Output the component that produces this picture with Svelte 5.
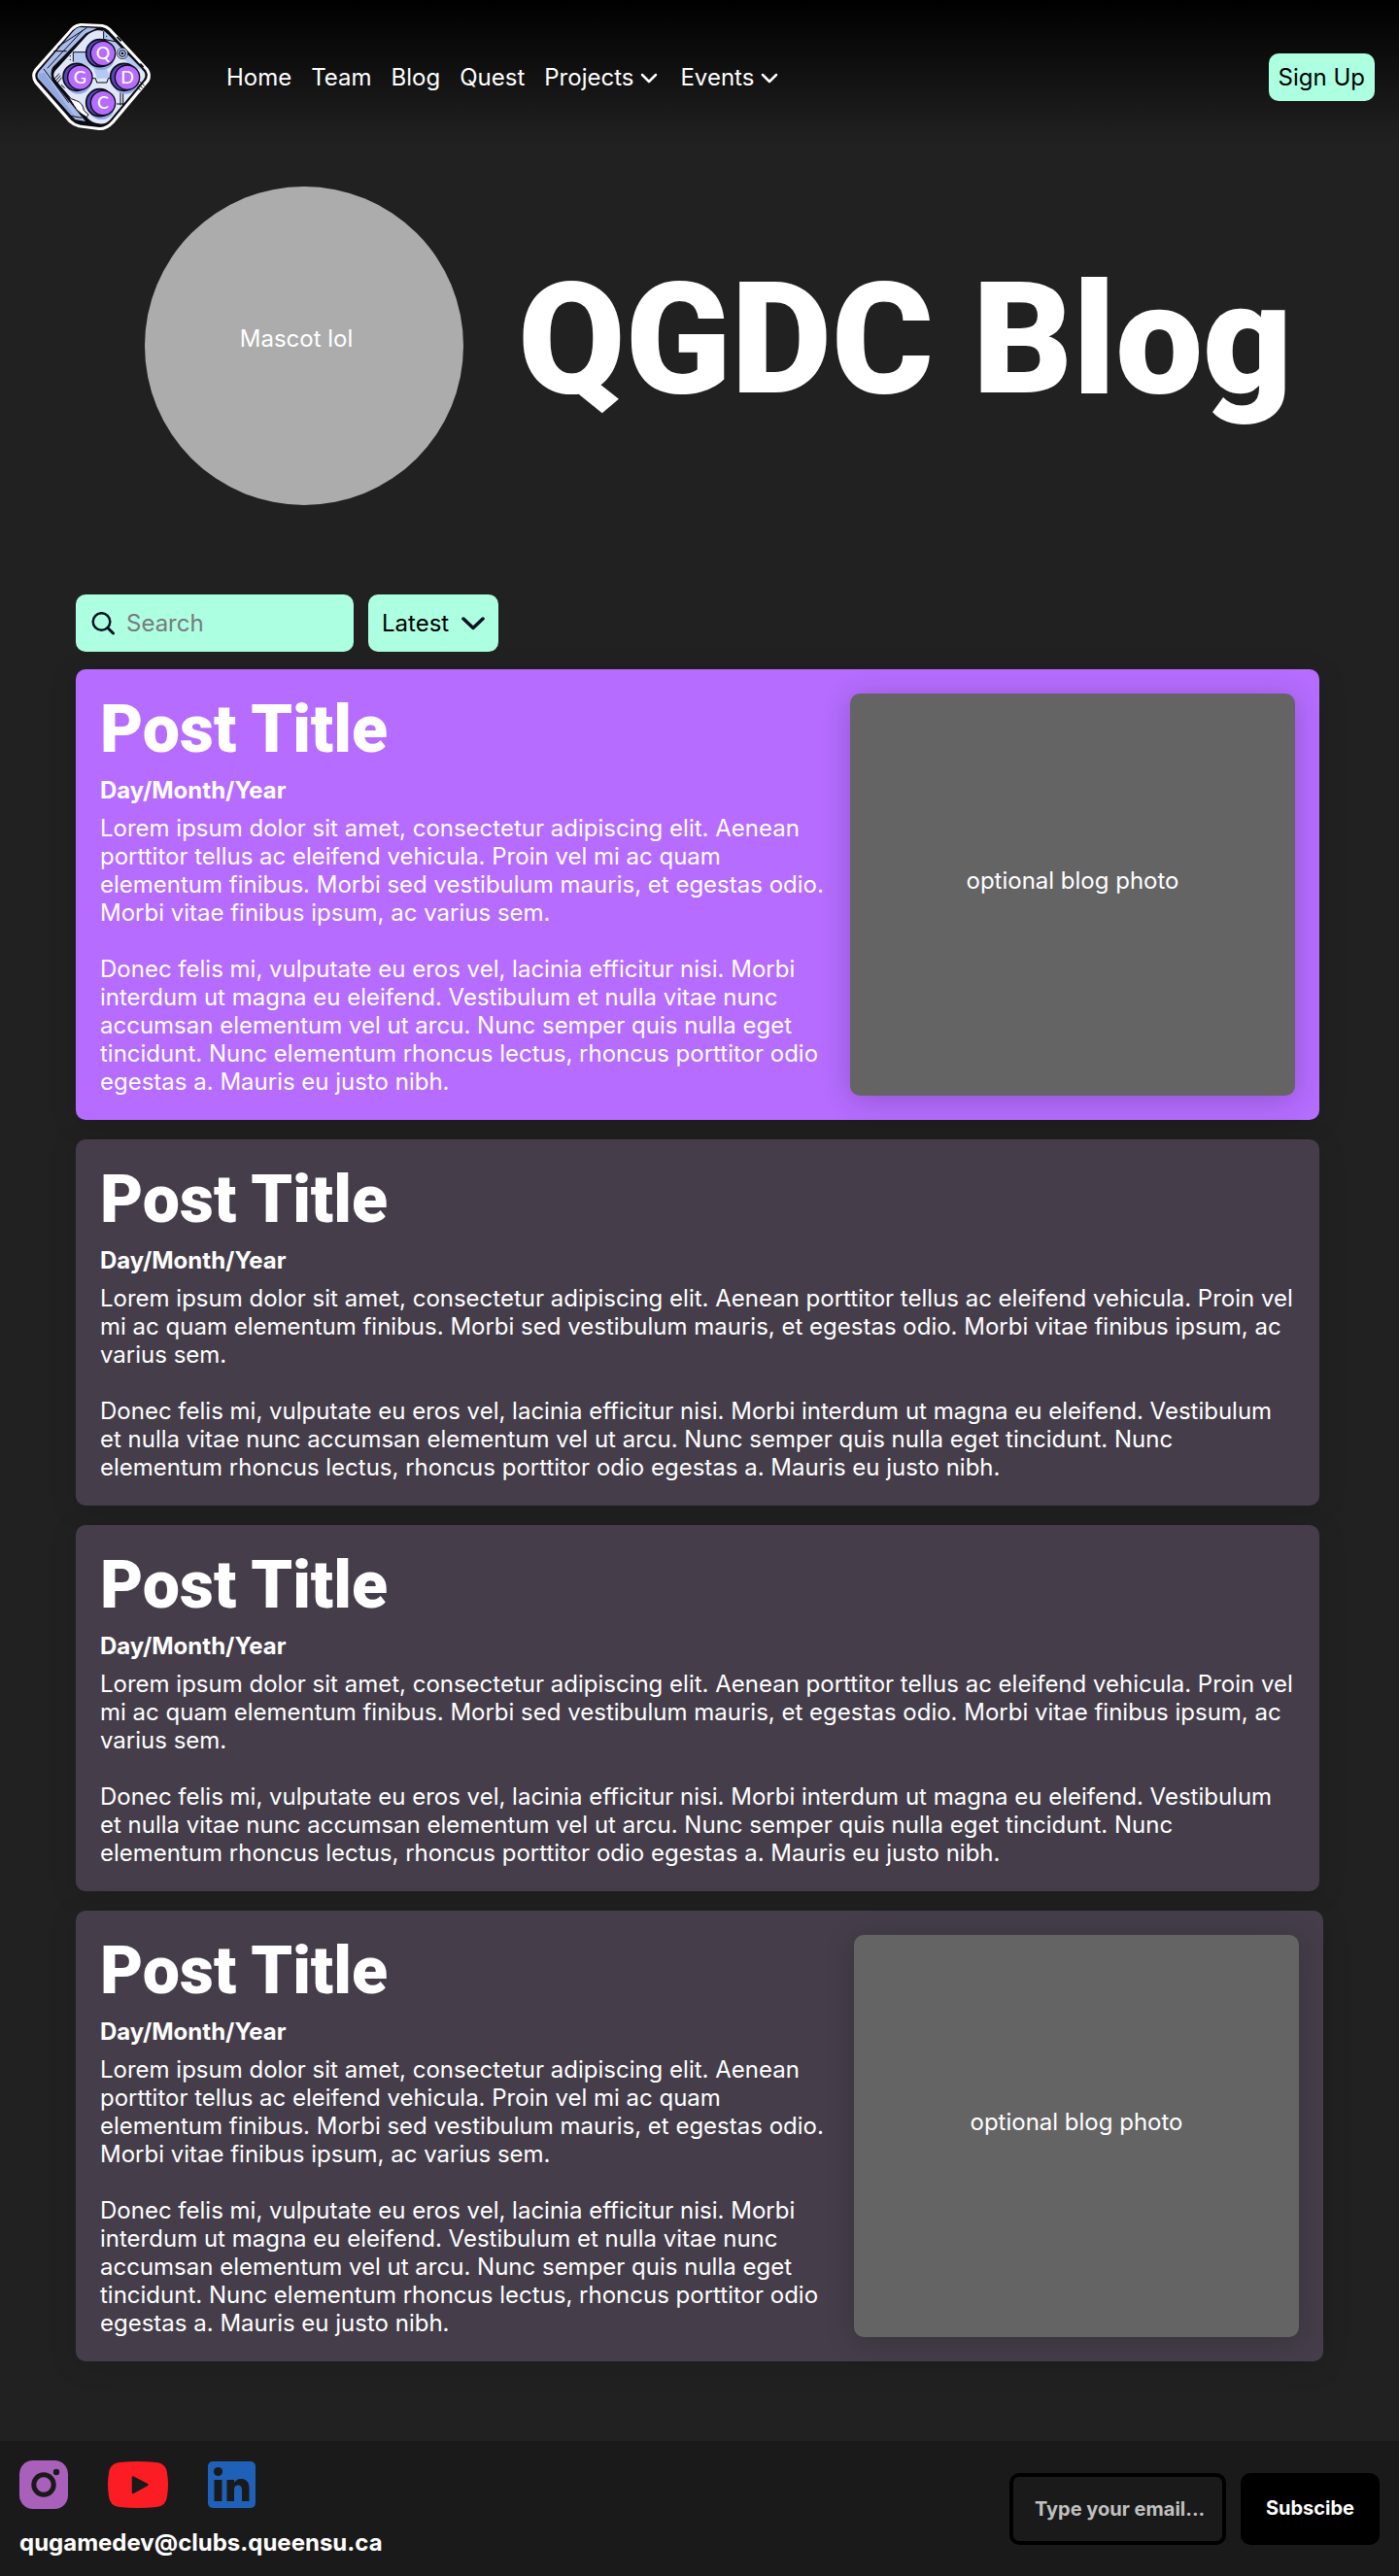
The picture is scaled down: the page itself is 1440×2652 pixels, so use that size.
<script>
  const links = ['Home', 'Team', 'Blog', 'Quest'];
  const menus = ['Projects', 'Events'];
  const intro =
    'Lorem ipsum dolor sit amet, consectetur adipiscing elit. Aenean porttitor tellus ac eleifend vehicula. Proin vel mi ac quam elementum finibus. Morbi sed vestibulum mauris, et egestas odio. Morbi vitae finibus ipsum, ac varius sem.';
  const rest =
    'Donec felis mi, vulputate eu eros vel, lacinia efficitur nisi. Morbi interdum ut magna eu eleifend. Vestibulum et nulla vitae nunc accumsan elementum vel ut arcu. Nunc semper quis nulla eget tincidunt. Nunc elementum rhoncus lectus, rhoncus porttitor odio egestas a. Mauris eu justo nibh.';
  const posts = [
    { featured: true, photo: true },
    { featured: false, photo: false },
    { featured: false, photo: false },
    { featured: false, photo: true }
  ];
  const keys = [
    { letter: 'Q', x: 258, y: 134 },
    { letter: 'G', x: 187, y: 208 },
    { letter: 'D', x: 333, y: 208 },
    { letter: 'C', x: 258, y: 287 }
  ];
</script>

<div class="page">
  <header>
    <a class="logo" href="#home" aria-label="QGDC home">
      <svg viewBox="30 35 384 345" width="128" height="115" aria-hidden="true">
        <path d="M190 41 L257 44 Q272 47 282 57 L398 181 Q411 201 400 221 L292 349 Q270 373 245 371 L183 363 Q165 358 152 346 L47 226 Q32 204 46 183 L158 57 Q171 42 190 41Z" fill="#fff" />
        <path d="M192 49 L254 52 Q266 54 275 63 L390 186 Q400 201 391 216 L286 342 Q267 364 246 362 L188 355 Q171 351 160 340 L55 220 Q43 204 54 188 L164 63 Q175 51 192 49Z" fill="#0b0b10" />
        <path d="M185 53 L239 56 L205 72 L103 176 Q91 196 104 222 L204 344 L172 338 L60 214 Q51 204 60 190 L165 67Q175 55 185 53Z" fill="#a9bce9" />
        <path d="M60 196 L78 194 L140 286 L170 326 L166 333 L60 212Z" fill="#93a8df" />
        <path d="M240 63 Q254 61 266 70 L385 190 Q392 202 384 214 L281 338 Q265 355 246 351 Q226 350 212 335 L110 214 Q101 201 110 188 L207 80 Q222 66 240 63Z" fill="#e0e7fb" />
        <path d="M258 62 L275 76 L380 184 L348 178 L312 140 L260 90Z M166 130 L212 130 L222 180 L268 178 L282 210 L240 212 L228 178 L166 160Z" fill="#b5c8f2" />
        <path d="M106 127 L146 127 M118 114 L208 55 M86 180 L196 62 M75 182 L152 286 M158 327 L193 333 M166 130 H212 M166 130 V160 M224 211 H235 L239 224 H270 L274 211 H290 M260 66 V90 L300 98 M312 251 V294 M320 251 V294 M300 290 H327 M384 186 L395 202" fill="none" stroke="#0b0b10" stroke-width="3" />
        <path d="M106 215 L123 196 M110 221 L127 202 M117 225 L131 208 M122 234 L131 243 M129 231 L140 241 M362 236 L374 248 M367 229 L380 241 M372 221 L386 234" stroke="#0b0b10" stroke-width="3" />
        <circle cx="157" cy="142" r="2" /><circle cx="157" cy="153" r="2" /><circle cx="269" cy="81" r="2" />
        <circle cx="318" cy="134" r="17" fill="#b5c8f2" stroke="#0b0b10" stroke-width="2" />
        <circle cx="318" cy="134" r="10" fill="none" stroke="#0b0b10" stroke-width="3" />
        <circle cx="318" cy="134" r="4" />
        <path d="M148 264 Q158 276 176 280 Q196 287 199 310 L213 323 L208 331 L192 321 Q174 309 163 286Z" fill="#fff" stroke="#0b0b10" stroke-width="3" />
        <path d="M301 83 L314 96 M373 166 L383 176" stroke="#0b0b10" stroke-width="5" />
        {#each keys as key}
          <ellipse cx={key.x - 5} cy={key.y + 14} rx="40" ry="37" fill="#8fa8e5" />
          <circle cx={key.x - 10} cy={key.y - 1} r="42" fill="#5546b8" stroke="#0b0b10" stroke-width="5" />
          <circle cx={key.x} cy={key.y} r="38" fill="#b56cff" stroke="#0b0b10" stroke-width="4" />
          <text x={key.x} y={key.y + 19} text-anchor="middle">{key.letter}</text>
        {/each}
      </svg>
    </a>
    <nav aria-label="Main">
      {#each links as link}
        <a href="#{link.toLowerCase()}">{link}</a>
      {/each}
      {#each menus as menu}
        <button type="button" class="menu">
          {menu}
          <svg viewBox="0 0 24 24" width="24" height="24" aria-hidden="true">
            <path d="M5 9 L12 16 L19 9" fill="none" stroke="#fff" stroke-width="2.5" stroke-linecap="round" stroke-linejoin="round" />
          </svg>
        </button>
      {/each}
    </nav>
    <button type="button" class="signup">Sign Up</button>
  </header>

  <section class="hero">
    <div class="mascot">Mascot lol</div>
    <h1>QGDC Blog</h1>
  </section>

  <main>
    <div class="tools">
      <label class="search">
        <svg viewBox="0 0 24 24" width="24" height="24" aria-hidden="true">
          <circle cx="10.500" cy="10" r="8.800" fill="none" stroke="#04121f" stroke-width="2.500" />
          <path d="M17 16.500 L22.500 22" stroke="#04121f" stroke-width="3" stroke-linecap="round" />
        </svg>
        <input type="search" placeholder="Search" aria-label="Search posts" />
      </label>
      <div class="sort">
        <select aria-label="Sort posts">
          <option>Latest</option>
          <option>Oldest</option>
        </select>
        <svg viewBox="0 0 24 14" width="24" height="14" aria-hidden="true">
          <path d="M2 2 L12 11.5 L22 2" fill="none" stroke="#04121f" stroke-width="3.5" stroke-linecap="round" stroke-linejoin="round" />
        </svg>
      </div>
    </div>

    {#each posts as post}
      <article class:featured={post.featured}>
        <div class="copy">
          <h2>Post Title</h2>
          <p class="date">Day/Month/Year</p>
          <div class="body">
            <p>{intro}</p>
            <p>{rest}</p>
          </div>
        </div>
        {#if post.photo}
          <div class="photo">optional blog photo</div>
        {/if}
      </article>
    {/each}
  </main>

  <footer>
    <div class="contact">
      <div class="social">
        <a href="#instagram" aria-label="Instagram">
          <svg viewBox="0 0 50 50" width="50" height="50" aria-hidden="true">
            <rect width="50" height="50" rx="14" fill="#a860bb" />
            <circle cx="25" cy="25" r="10.2" fill="none" stroke="#1a1a1a" stroke-width="5" />
            <circle cx="38" cy="12" r="3.2" fill="#1a1a1a" />
          </svg>
        </a>
        <a href="#youtube" aria-label="YouTube">
          <svg viewBox="0 0 62 48" width="62" height="48" aria-hidden="true">
            <path d="M12 1 Q31 -1 50 1 Q60 2 61 12 Q63 24 61 36 Q60 46 50 47 Q31 49 12 47 Q2 46 1 36 Q-1 24 1 12 Q2 2 12 1Z" fill="#fc1c23" />
            <path d="M26 16.500 L40.500 24 L26 32Z" fill="#1a1a1a" stroke="#1a1a1a" stroke-width="2.500" stroke-linejoin="round" />
          </svg>
        </a>
        <a href="#linkedin" aria-label="LinkedIn">
          <svg viewBox="0 0 49 48" width="49" height="48" aria-hidden="true">
            <rect width="49" height="48" rx="5" fill="#1f61b8" />
            <circle cx="10.500" cy="10.500" r="4.600" fill="#1a1a1a" />
            <path d="M6.500 19 H14.500 V41 H6.500Z M19.500 19 H27 V22 Q29.500 18 34 18 Q42.500 18 42.500 28 V41 H35 V29.500 Q35 24.500 31 24.500 Q27 24.500 27 29.500 V41 H19.500Z" fill="#1a1a1a" />
          </svg>
        </a>
      </div>
      <a class="mail" href="mailto:qugamedev@clubs.queensu.ca">qugamedev@clubs.queensu.ca</a>
    </div>
    <form>
      <input type="email" placeholder="Type your email..." aria-label="Email address" />
      <button type="button">Subscibe</button>
    </form>
  </footer>
</div>

<style>
  :global(body) {
    margin: 0;
    background: #212121;
  }
  .page,
  .page button,
  .page input,
  .page select {
    font-family: Inter, 'Liberation Sans', sans-serif;
    font-size: 24px;
    line-height: 29px;
  }
  .page {
    color: #fff;
    background: #212121;
  }
  .page * {
    box-sizing: border-box;
  }
  a {
    color: inherit;
    text-decoration: none;
  }
  button {
    border: 0;
    cursor: pointer;
  }
  svg {
    display: block;
    flex: none;
  }
  h1,
  h2,
  p {
    margin: 0;
  }
  header {
    display: flex;
    align-items: center;
    padding: 22px 25px 10px 30px;
    background: linear-gradient(#000, #212121);
  }
  .logo text {
    font: 500 54px Lato, sans-serif;
    fill: #fff;
  }
  nav {
    display: flex;
    align-items: center;
    gap: 20px;
    margin: 0 auto 0 75px;
  }
  .menu {
    display: flex;
    align-items: center;
    gap: 4px;
    padding: 0;
    color: #fff;
    background: none;
  }
  .signup {
    padding: 10px;
    border-radius: 10px;
    color: #000;
    background: #adffe2;
  }
  .hero {
    display: flex;
    align-items: center;
    gap: 56px;
    padding: 45px 80px 92px 149px;
  }
  .mascot {
    display: grid;
    flex: none;
    place-items: center;
    width: 328px;
    aspect-ratio: 1;
    padding: 0 16px 16px 0;
    border-radius: 50%;
    background: #acacac;
  }
  h1,
  h2 {
    font-family: Roboto, 'Liberation Sans', sans-serif;
    font-weight: 900;
  }
  h1 {
    padding-bottom: 12px;
    font-size: 160px;
    line-height: 188px;
    white-space: nowrap;
  }
  main {
    display: flex;
    flex-direction: column;
    gap: 20px;
    padding: 0 78px 82px;
  }
  .tools {
    display: flex;
    gap: 15px;
    margin-bottom: -2px;
  }
  .search {
    display: flex;
    align-items: center;
    gap: 12px;
    width: 286px;
    height: 59px;
    padding: 0 16px;
    border-radius: 10px;
    background: #adffe2;
  }
  .search input {
    width: 100%;
    min-width: 0;
    padding: 0;
    border: 0;
    outline: 0;
    color: #000;
    background: none;
  }
  .search input::placeholder {
    color: #7a7a7a;
    opacity: 1;
  }
  .sort {
    display: grid;
    align-items: center;
  }
  .sort > * {
    grid-area: 1 / 1;
  }
  .sort select {
    width: 134px;
    height: 59px;
    padding: 0 14px;
    border: 0;
    border-radius: 10px;
    appearance: none;
    color: #000;
    background: #adffe2;
  }
  .sort svg {
    justify-self: end;
    margin-right: 14px;
    pointer-events: none;
  }
  article {
    display: flex;
    gap: 25px;
    margin-right: 4px;
    padding: 25px;
    border-radius: 10px;
    background: #453e4a;
    box-shadow: 0 4px 30px rgba(0, 0, 0, 0.12);
  }
  article:last-child {
    margin-right: 0;
  }
  .featured {
    background: #b56cff;
  }
  .copy {
    display: flex;
    flex: 1;
    flex-direction: column;
    gap: 10px;
    min-width: 0;
  }
  h2 {
    font-size: 68px;
    line-height: 75px;
  }
  .date {
    font-weight: 700;
  }
  .body {
    display: flex;
    flex-direction: column;
    gap: 29px;
  }
  .photo {
    display: grid;
    flex: none;
    place-items: center;
    width: 458px;
    padding-bottom: 30px;
    border-radius: 10px;
    background: #646464;
    box-shadow: 0 4px 30px rgba(0, 0, 0, 0.2);
  }
  footer {
    display: flex;
    align-items: center;
    justify-content: space-between;
    padding: 20px;
    background: #1a1a1a;
  }
  .contact {
    display: grid;
    gap: 20px;
  }
  .social {
    display: flex;
    align-items: center;
    gap: 41px;
  }
  .mail {
    font-weight: 700;
  }
  form {
    display: flex;
    gap: 15px;
  }
  form input,
  form button {
    height: 74px;
    border-radius: 10px;
  }
  .page form input,
  .page form button {
    font-size: 20px;
    font-weight: 700;
  }
  form input {
    width: 223px;
    padding: 0 8px 0 22px;
    border: 4px solid #000;
    color: #fff;
    background: none;
  }
  form input::placeholder {
    color: #c0c0c0;
    opacity: 1;
  }
  form button {
    padding: 0 26px;
    color: #fff;
    background: #000;
  }
</style>
